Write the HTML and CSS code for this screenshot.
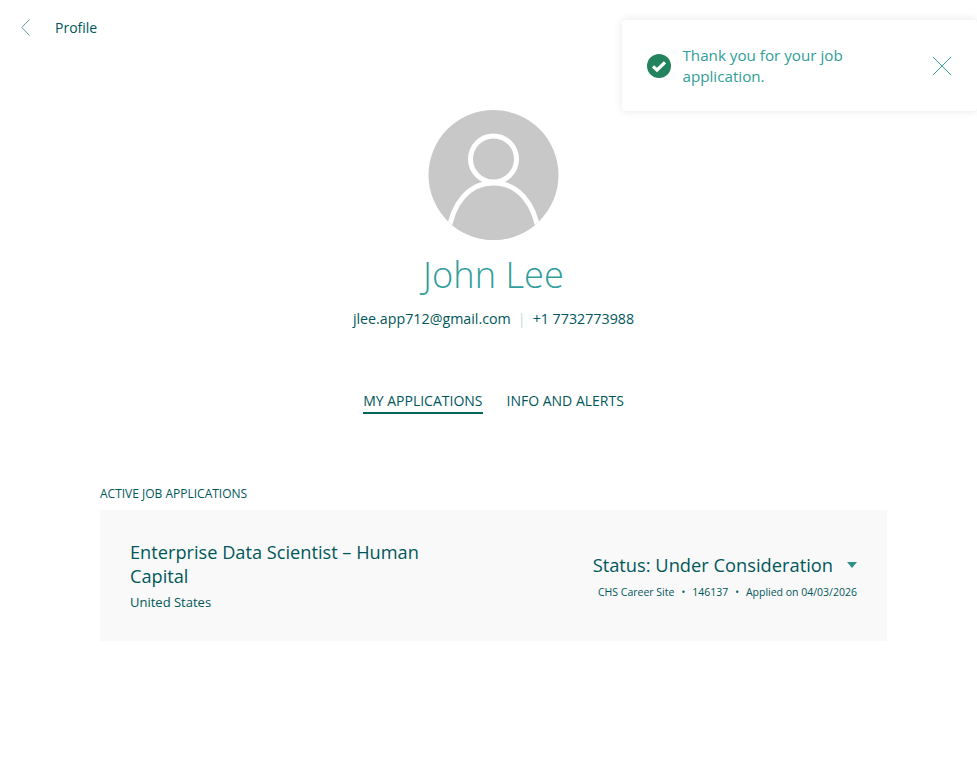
FILE: index.html
```html
<!DOCTYPE html>
<html lang="en">
<head>
  <meta charset="UTF-8">
  <meta name="viewport" content="width=device-width, initial-scale=1.0">
  <title>Profile</title>
  <link rel="stylesheet" href="styles.css">
</head>
<body>
  <header class="top-bar">
    <a class="back-link" href="#">
      <svg class="back-icon" width="9" height="17" viewBox="0 0 9 17"><path d="M8.500 .5 .8 8.500l7.700 8" fill="none" stroke="#5d9a97" stroke-width="1"/></svg>
      <span>Profile</span>
    </a>
  </header>

  <div class="toast">
    <svg class="toast-icon" width="24" height="24" viewBox="0 0 24 24">
      <circle cx="12" cy="12" r="12" fill="#24835f"/>
      <path d="M6 12.300 10 16 18 8.300" fill="none" stroke="#fff" stroke-width="3.200"/>
    </svg>
    <p class="toast-text">Thank you for your job application.</p>
    <svg class="toast-close" width="20" height="20" viewBox="0 0 20 20"><path d="M1 1 19 19M19 1 1 19" fill="none" stroke="#35a095" stroke-width="1"/></svg>
  </div>

  <section class="profile">
    <svg class="avatar" width="131" height="130" viewBox="0 0 131 130">
      <defs><clipPath id="avatarClip"><circle cx="65.500" cy="65" r="65"/></clipPath></defs>
      <circle cx="65.500" cy="65" r="65" fill="#c8c8c8"/>
      <g clip-path="url(#avatarClip)">
        <circle cx="65.500" cy="49" r="23" fill="none" stroke="#fff" stroke-width="5"/>
        <path d="M20 125C24 92 42 73 65.500 73S107 92 111 125L111 145H20Z" fill="#c8c8c8" stroke="#fff" stroke-width="5"/>
      </g>
    </svg>
    <h1 class="profile-name">John Lee</h1>
    <p class="contact">
      <span>jlee.app712@gmail.com</span>
      <span class="contact-sep">|</span>
      <span>+1 7732773988</span>
    </p>
    <nav class="tabs">
      <a class="tab active" href="#">MY APPLICATIONS</a>
      <a class="tab" href="#">INFO AND ALERTS</a>
    </nav>
  </section>

  <main class="applications">
    <h2 class="section-label">ACTIVE JOB APPLICATIONS</h2>
    <div class="app-card">
      <div class="app-info">
        <div class="app-title">Enterprise Data Scientist – Human Capital</div>
        <div class="app-location">United States</div>
      </div>
      <div class="app-status">
        <div class="status-line">
          <span>Status: Under Consideration</span>
          <span class="caret"></span>
        </div>
        <div class="app-meta">
          <span>CHS Career Site</span>
          <span class="dot">•</span>
          <span>146137</span>
          <span class="dot">•</span>
          <span>Applied on 04/03/2026</span>
        </div>
      </div>
    </div>
  </main>
</body>
</html>
```

FILE: styles.css
```css
body {
  margin: 0;
  font-family: "Open Sans", sans-serif;
  color: #00575a;
  background-color: #fff;
}

a {
  color: inherit;
  text-decoration: none;
}

.top-bar {
  height: 54px;
  padding-left: 21px;
  display: flex;
  align-items: center;
}

.back-link {
  display: flex;
  align-items: center;
  font-size: 14px;
}

.back-icon {
  margin-right: 25px;
}

.toast {
  position: absolute;
  top: 20px;
  right: 0;
  width: 355px;
  height: 91px;
  box-sizing: border-box;
  padding: 0 25px;
  display: flex;
  align-items: center;
  background-color: #fff;
  border-radius: 4px;
  box-shadow: 0 0 10px rgba(0, 0, 0, 0.1);
}

.toast-icon {
  flex: none;
  margin-right: 11.500px;
}

.toast-text {
  margin: 0;
  width: 195px;
  font-size: 15.200px;
  line-height: 21px;
  color: #2f9e96;
}

.toast-close {
  flex: none;
  margin-left: auto;
}

.profile {
  margin-left: 10px;
  padding-top: 56px;
  display: flex;
  flex-direction: column;
  align-items: center;
}

.avatar {
  display: block;
}

.profile-name {
  margin: 7px 0 0;
  font-size: 36.250px;
  line-height: 54px;
  font-weight: 300;
  color: #2f9e9c;
}

.contact {
  margin: 8px 0 0;
  font-size: 14.250px;
  line-height: 20px;
  display: flex;
  gap: 7px;
}

.contact-sep {
  color: #c4dcdc;
}

.tabs {
  margin-top: 62px;
  display: flex;
  gap: 24px;
  font-size: 14px;
}

.tab {
  line-height: 20px;
  padding-bottom: 1px;
  border-bottom: 2px solid transparent;
}

.tab.active {
  border-bottom-color: #00665e;
}

.applications {
  margin: 71px 90px 0 100px;
}

.section-label {
  margin: 0 0 8px;
  font-size: 12px;
  line-height: 17px;
  font-weight: 400;
}

.app-card {
  height: 131px;
  box-sizing: border-box;
  padding: 0 30px;
  display: flex;
  align-items: center;
  justify-content: space-between;
  background-color: #f9f9f9;
}

.app-info {
  width: 310px;
}

.app-title {
  font-size: 18.200px;
  line-height: 24px;
}

.app-location {
  margin-top: 6px;
  font-size: 13px;
  line-height: 17px;
}

.app-status {
  text-align: right;
}

.status-line {
  font-size: 18.300px;
  line-height: 24px;
  display: flex;
  align-items: center;
  justify-content: flex-end;
}

.caret {
  margin-left: 14px;
  border-left: 5px solid transparent;
  border-right: 5px solid transparent;
  border-top: 6px solid #2f9188;
}

.app-meta {
  margin-top: 8px;
  font-size: 10.500px;
  line-height: 14px;
  display: flex;
  justify-content: flex-end;
  gap: 7px;
}

.dot {
  font-size: 10px;
}
```
